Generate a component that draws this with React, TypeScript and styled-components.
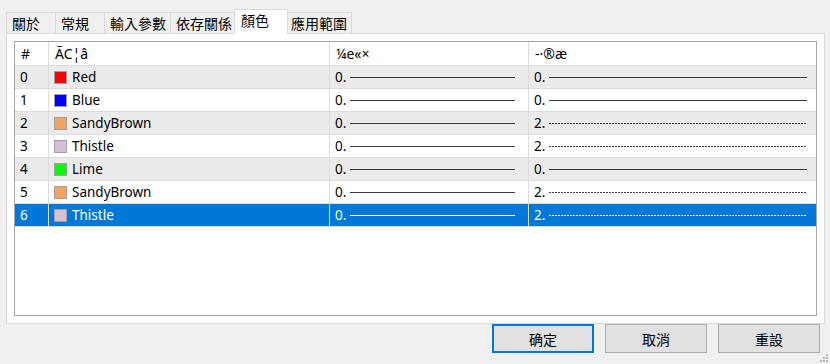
import styled, { createGlobalStyle } from "styled-components";

const GlobalStyle = createGlobalStyle`
  html, body {
    margin: 0;
    padding: 0;
    background: #f0f0f0;
  }
  * {
    box-sizing: border-box;
  }
`;

const FONT = `"Noto Sans", "Noto Sans CJK TC", sans-serif`;

type Row = {
  name: string;
  color: string;
  width: string;
  style: "solid" | "dotted";
};

const rows: Row[] = [
  { name: "Red", color: "#ff0000", width: "0.", style: "solid" },
  { name: "Blue", color: "#0000ff", width: "0.", style: "solid" },
  { name: "SandyBrown", color: "#f4a460", width: "0.", style: "dotted" },
  { name: "Thistle", color: "#d8bfd8", width: "0.", style: "dotted" },
  { name: "Lime", color: "#00ff00", width: "0.", style: "solid" },
  { name: "SandyBrown", color: "#f4a460", width: "0.", style: "dotted" },
  { name: "Thistle", color: "#d8bfd8", width: "0.", style: "dotted" },
];

const tabs = ["關於", "常規", "輸入參數", "依存關係", "顏色", "應用範圍"];
const ACTIVE_TAB = 4;
const SELECTED_ROW = 6;

const Window = styled.div`
  position: relative;
  width: 830px;
  height: 364px;
  padding: 10px 5px 0 6px;
  display: flex;
  flex-direction: column;
  font-family: ${FONT};
  color: #000;
  overflow: hidden;
`;

const TabStrip = styled.div`
  display: flex;
  align-items: flex-end;
  height: 23px;
  padding-left: 1px;
`;

const Tab = styled.div<{ $active?: boolean }>`
  position: relative;
  min-width: ${({ $active }) => ($active ? "54px" : "50px")};
  height: ${({ $active }) => ($active ? "25px" : "21px")};
  margin: ${({ $active }) => ($active ? "0 -2px -1px -3px" : "0 0 0 -1px")};
  padding: ${({ $active }) => ($active ? "1px 4px 0 6px" : "0 4px 0 5px")};
  border: 1px solid #d9d9d9;
  border-bottom: none;
  background: ${({ $active }) => ($active ? "#ffffff" : "#f0f0f0")};
  z-index: ${({ $active }) => ($active ? 2 : 1)};
  font-size: 14px;
  line-height: 19px;
  display: flex;
  align-items: ${({ $active }) => ($active ? "flex-start" : "center")};
  white-space: nowrap;
`;

const Panel = styled.div`
  height: 291px;
  background: #ffffff;
  border: 1px solid #d9d9d9;
  padding: 7px;
  display: flex;
`;

const ListView = styled.div`
  flex: 1;
  border: 1px solid #a7a7a7;
  background: #ffffff;
  display: flex;
  flex-direction: column;
`;

const GridRow = styled.div<{ $bg: string; $header?: boolean }>`
  display: grid;
  grid-template-columns: 34px 281px 199px 1fr;
  height: ${({ $header }) => ($header ? "24px" : "23px")};
  background: ${({ $bg }) => $bg};
  border-bottom: 1px solid #dcdcdc;
`;

const Cell = styled.div<{ $light?: boolean; $last?: boolean }>`
  display: flex;
  align-items: center;
  padding-left: 5px;
  border-right: ${({ $last }) => ($last ? "none" : "1px solid #dcdcdc")};
  font-size: 13.5px;
  color: ${({ $light }) => ($light ? "#ffffff" : "#000000")};
  white-space: nowrap;
  overflow: hidden;
`;

const HeaderCell = styled(Cell)`
  font-size: 14px;
  padding-left: 6px;
`;

const NameCell = styled(Cell)`
  padding-left: 5px;
  gap: 5px;
`;

const Swatch = styled.span<{ $color: string }>`
  width: 13px;
  height: 13px;
  background: ${({ $color }) => $color};
  border: 1px solid #a0a0a0;
  flex: none;
`;

const LineCell = styled(Cell)<{ $pad: number }>`
  padding-right: ${({ $pad }) => $pad}px;
  gap: 4px;
`;

const Stroke = styled.span<{ $dotted?: boolean; $light?: boolean }>`
  flex: 1;
  height: 1px;
  margin-top: 1px;
  background: ${({ $dotted, $light }) => {
    const c = $light ? "#ffffff" : "#3a3a3a";
    return $dotted
      ? `repeating-linear-gradient(90deg, ${c} 0 2px, transparent 2px 3px)`
      : c;
  }};
`;

const Footer = styled.div`
  display: flex;
  justify-content: flex-end;
  gap: 11px;
  padding-right: 5px;
`;

const Button = styled.button<{ $default?: boolean }>`
  width: 102px;
  height: 29px;
  background: #e1e1e1;
  border: ${({ $default }) => ($default ? "2px solid #0078d7" : "1px solid #adadad")};
  font-family: ${FONT};
  font-size: 14px;
  color: #000;
  padding: 0;
  cursor: default;
`;

const Grip = styled.svg`
  position: absolute;
  right: 2px;
  bottom: 2px;
`;

export default function App() {
  return (
    <>
      <GlobalStyle />
      <Window>
        <TabStrip>
          {tabs.map((t, i) => (
            <Tab key={t} $active={i === ACTIVE_TAB}>
              {t}
            </Tab>
          ))}
        </TabStrip>
        <Panel>
          <ListView>
            <GridRow $bg="#ffffff" $header>
              <HeaderCell>#</HeaderCell>
              <HeaderCell>ÃC¦â</HeaderCell>
              <HeaderCell>¼e«×</HeaderCell>
              <HeaderCell $last>-·®æ</HeaderCell>
            </GridRow>
            {rows.map((r, i) => {
              const sel = i === SELECTED_ROW;
              const bg = sel ? "#0078d7" : i % 2 === 0 ? "#ebebeb" : "#ffffff";
              return (
                <GridRow key={i} $bg={bg}>
                  <Cell $light={sel}>{i}</Cell>
                  <NameCell $light={sel}>
                    <Swatch $color={r.color} />
                    {r.name}
                  </NameCell>
                  <LineCell $light={sel} $pad={13}>
                    {r.width}
                    <Stroke $light={sel} />
                  </LineCell>
                  <LineCell $light={sel} $pad={9} $last>
                    {r.style === "solid" ? "0." : "2."}
                    <Stroke $light={sel} $dotted={r.style === "dotted"} />
                  </LineCell>
                </GridRow>
              );
            })}
          </ListView>
        </Panel>
        <Footer>
          <Button $default>确定</Button>
          <Button>取消</Button>
          <Button>重設</Button>
        </Footer>
        <Grip width="8" height="8" viewBox="0 0 8 8">
          <rect x="6" y="0" width="2" height="2" fill="#b8b8b8" />
          <rect x="3" y="3" width="2" height="2" fill="#b8b8b8" />
          <rect x="6" y="3" width="2" height="2" fill="#b8b8b8" />
          <rect x="0" y="6" width="2" height="2" fill="#b8b8b8" />
          <rect x="3" y="6" width="2" height="2" fill="#b8b8b8" />
          <rect x="6" y="6" width="2" height="2" fill="#b8b8b8" />
        </Grip>
      </Window>
    </>
  );
}
